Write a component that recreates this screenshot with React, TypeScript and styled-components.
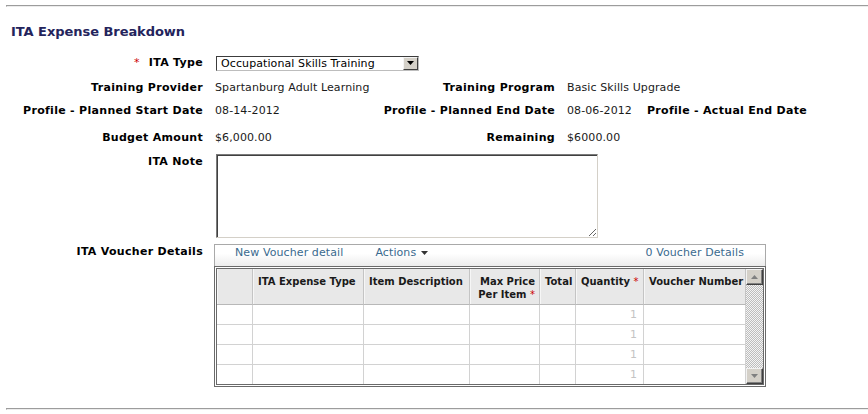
import React from "react";
import styled, { createGlobalStyle } from "styled-components";

const GlobalStyle = createGlobalStyle`
  html, body { margin: 0; padding: 0; background: #ffffff; }
  body {
    font-family: "DejaVu Sans", Verdana, sans-serif;
    font-size: 11px;
    color: #111;
  }
  * { box-sizing: border-box; }
`;

const Page = styled.div`
  width: 868px;
  height: 414px;
  padding: 5px 0 0 6px;
  overflow: hidden;
`;

const Rule = styled.div<{ $mt?: number }>`
  height: 2px;
  margin-top: ${(p) => p.$mt ?? 0}px;
  border-top: 1px solid #9c9c9c;
  border-left: 1px solid #9c9c9c;
  border-bottom: 1px solid #ececec;
`;

const Heading = styled.h2`
  margin: 17px 0 0 5px;
  font-size: 13px;
  line-height: 16px;
  font-weight: bold;
  color: #24245c;
  letter-spacing: -0.05px;
`;

const FieldRow = styled.div<{ $mt: number; $h?: number; $align?: string }>`
  display: grid;
  grid-template-columns: 197px 150px 178px 68px auto;
  column-gap: 12px;
  align-items: ${(p) => p.$align ?? "center"};
  margin-top: ${(p) => p.$mt}px;
  height: ${(p) => (p.$h ? `${p.$h}px` : "auto")};
  white-space: nowrap;
`;

const Label = styled.div<{ $lh?: number }>`
  text-align: right;
  font-weight: bold;
  letter-spacing: 0.3px;
  line-height: ${(p) => p.$lh ?? 18}px;
  color: #000;
  align-self: ${(p) => (p.$lh ? "start" : "center")};
`;

const LeftLabel = styled(Label)`
  text-align: left;
`;

const Value = styled.div`
  line-height: 18px;
  letter-spacing: 0.1px;
  color: #1a1a1a;
`;

const Req = styled.span`
  color: #cc0000;
  font-weight: normal;
  margin-right: 9px;
`;

const ReqAfter = styled.span`
  color: #cc0000;
  font-weight: normal;
`;

const Span = styled.div`
  grid-column: 2 / -1;
`;

const SelectBox = styled.div`
  display: flex;
  width: 203px;
  height: 15px;
  margin-left: 1px;
  border: 1px solid #3c3c3c;
  border-right-color: #bdbdbd;
  border-bottom-color: #bdbdbd;
  background: #fff;
`;

const SelectText = styled.span`
  flex: 1;
  padding-left: 4px;
  line-height: 13px;
  letter-spacing: 0.1px;
  color: #000;
`;

const SelectButton = styled.span`
  width: 15px;
  height: 13px;
  display: flex;
  align-items: center;
  justify-content: center;
  background: #d4d0c8;
  border: 1px solid;
  border-color: #f4f4f4 #404040 #404040 #f4f4f4;
`;

const NoteArea = styled.textarea`
  display: block;
  width: 382px;
  height: 84px;
  margin: 0 0 0 1px;
  padding: 2px;
  border: 1px solid;
  border-color: #7a7a7a #d4d0c8 #d4d0c8 #7a7a7a;
  box-shadow: inset 1px 1px 0 #404040;
  font-family: "DejaVu Sans", sans-serif;
  font-size: 11px;
  background: #fff;
  outline: none;
`;

const Panel = styled.div`
  width: 552px;
  margin-left: -1px;
  display: flex;
  flex-direction: column;
`;

const Toolbar = styled.div`
  height: 22px;
  display: flex;
  align-items: flex-start;
  padding: 0 21px 0 20px;
  border: 1px solid #a9a9a9;
  border-bottom: none;
  background: linear-gradient(#ffffff, #ffffff 40%, #ececec);
  color: #3a6a8e;
  gap: 32px;
  line-height: 15px;
  letter-spacing: 0.1px;
`;

const ToolLink = styled.span`
  display: inline-flex;
  align-items: center;
  gap: 5px;
  cursor: pointer;
`;

const ToolCount = styled.span`
  margin-left: auto;
`;

const GridBox = styled.div`
  display: flex;
  border: 3px double #6a6a6a;
  height: 121px;
`;

const Table = styled.div`
  width: 529px;
  height: 115px;
  overflow: hidden;
  display: grid;
  grid-template-columns: 36px 111px 106px 70px 36px 68px 102px;
  grid-auto-rows: 20px;
  grid-template-rows: 36px;
`;

const HeadCell = styled.div<{ $right?: boolean }>`
  background: #e8e8e8;
  border-right: 1px solid #c4c4c4;
  border-bottom: 1px solid #b8b8b8;
  box-shadow: inset 1px 0 0 #f6f6f6;
  padding: 6px 4px 0 5px;
  font-size: 10px;
  line-height: 13px;
  font-weight: bold;
  color: #1a1a1a;
  text-align: ${(p) => (p.$right ? "right" : "left")};
  white-space: nowrap;
`;

const Cell = styled.div`
  border-right: 1px solid #d2d2d2;
  border-bottom: 1px solid #d2d2d2;
  text-align: right;
  padding-right: 6px;
  line-height: 20px;
  color: #c4c4c4;
  font-size: 11px;
`;

const ScrollBar = styled.div`
  width: 17px;
  display: flex;
  flex-direction: column;
  background: repeating-conic-gradient(#f4f4f4 0 25%, #bdbdbd 0 50%) 0 0 / 2px 2px;
`;

const ScrollBtn = styled.div`
  width: 17px;
  height: 16px;
  display: flex;
  align-items: center;
  justify-content: center;
  background: #d4d0c8;
  border: 1px solid;
  border-color: #f2f2f2 #404040 #404040 #f2f2f2;
  box-shadow: inset -1px -1px 0 #808080;
`;

const Track = styled.div`
  flex: 1;
`;

const columns: { label: React.ReactNode; right?: boolean }[] = [
  { label: "" },
  { label: "ITA Expense Type" },
  { label: "Item Description" },
  {
    label: (
      <>
        Max Price
        <br />
        Per Item <ReqAfter>*</ReqAfter>
      </>
    ),
    right: true,
  },
  { label: "Total" },
  {
    label: (
      <>
        Quantity <ReqAfter>*</ReqAfter>
      </>
    ),
  },
  { label: "Voucher Number" },
];

const Tri = ({ up, color = "#808080" }: { up?: boolean; color?: string }) => (
  <svg width="7" height="4" viewBox="0 0 7 4">
    <path d={up ? "M0 4 L3.5 0 L7 4 Z" : "M0 0 L7 0 L3.5 4 Z"} fill={color} />
  </svg>
);

export default function App() {
  const rows = [0, 1, 2, 3];
  return (
    <>
      <GlobalStyle />
      <Page>
        <Rule />
        <Heading>ITA Expense Breakdown</Heading>

        <FieldRow $mt={14} $h={16}>
          <Label>
            <Req>*</Req>ITA Type
          </Label>
          <Span>
            <SelectBox>
              <SelectText>Occupational Skills Training</SelectText>
              <SelectButton>
                <Tri color="#000" />
              </SelectButton>
            </SelectBox>
          </Span>
        </FieldRow>

        <FieldRow $mt={9}>
          <Label>Training Provider</Label>
          <Value>Spartanburg Adult Learning</Value>
          <Label>Training Program</Label>
          <Value>Basic Skills Upgrade</Value>
        </FieldRow>

        <FieldRow $mt={5}>
          <Label>Profile - Planned Start Date</Label>
          <Value>08-14-2012</Value>
          <Label>Profile - Planned End Date</Label>
          <Value>08-06-2012</Value>
          <LeftLabel>Profile - Actual End Date</LeftLabel>
        </FieldRow>

        <FieldRow $mt={9}>
          <Label>Budget Amount</Label>
          <Value>$6,000.00</Value>
          <Label>Remaining</Label>
          <Value>$6000.00</Value>
        </FieldRow>

        <FieldRow $mt={7} $align="start">
          <Label $lh={15}>ITA Note</Label>
          <Span>
            <NoteArea />
          </Span>
        </FieldRow>

        <FieldRow $mt={6} $align="start">
          <Label $lh={15}>ITA Voucher Details</Label>
          <Span>
            <Panel>
              <Toolbar>
                <ToolLink>New Voucher detail</ToolLink>
                <ToolLink>
                  Actions <Tri color="#333" />
                </ToolLink>
                <ToolCount>0 Voucher Details</ToolCount>
              </Toolbar>
              <GridBox>
                <Table>
                  {columns.map((c, i) => (
                    <HeadCell key={`h${i}`} $right={c.right}>
                      {c.label}
                    </HeadCell>
                  ))}
                  {rows.map((r) =>
                    columns.map((_, i) => (
                      <Cell key={`c${r}-${i}`}>{i === 5 ? "1" : ""}</Cell>
                    ))
                  )}
                </Table>
                <ScrollBar>
                  <ScrollBtn>
                    <Tri up />
                  </ScrollBtn>
                  <Track />
                  <ScrollBtn>
                    <Tri />
                  </ScrollBtn>
                </ScrollBar>
              </GridBox>
            </Panel>
          </Span>
        </FieldRow>

        <Rule $mt={21} />
      </Page>
    </>
  );
}
